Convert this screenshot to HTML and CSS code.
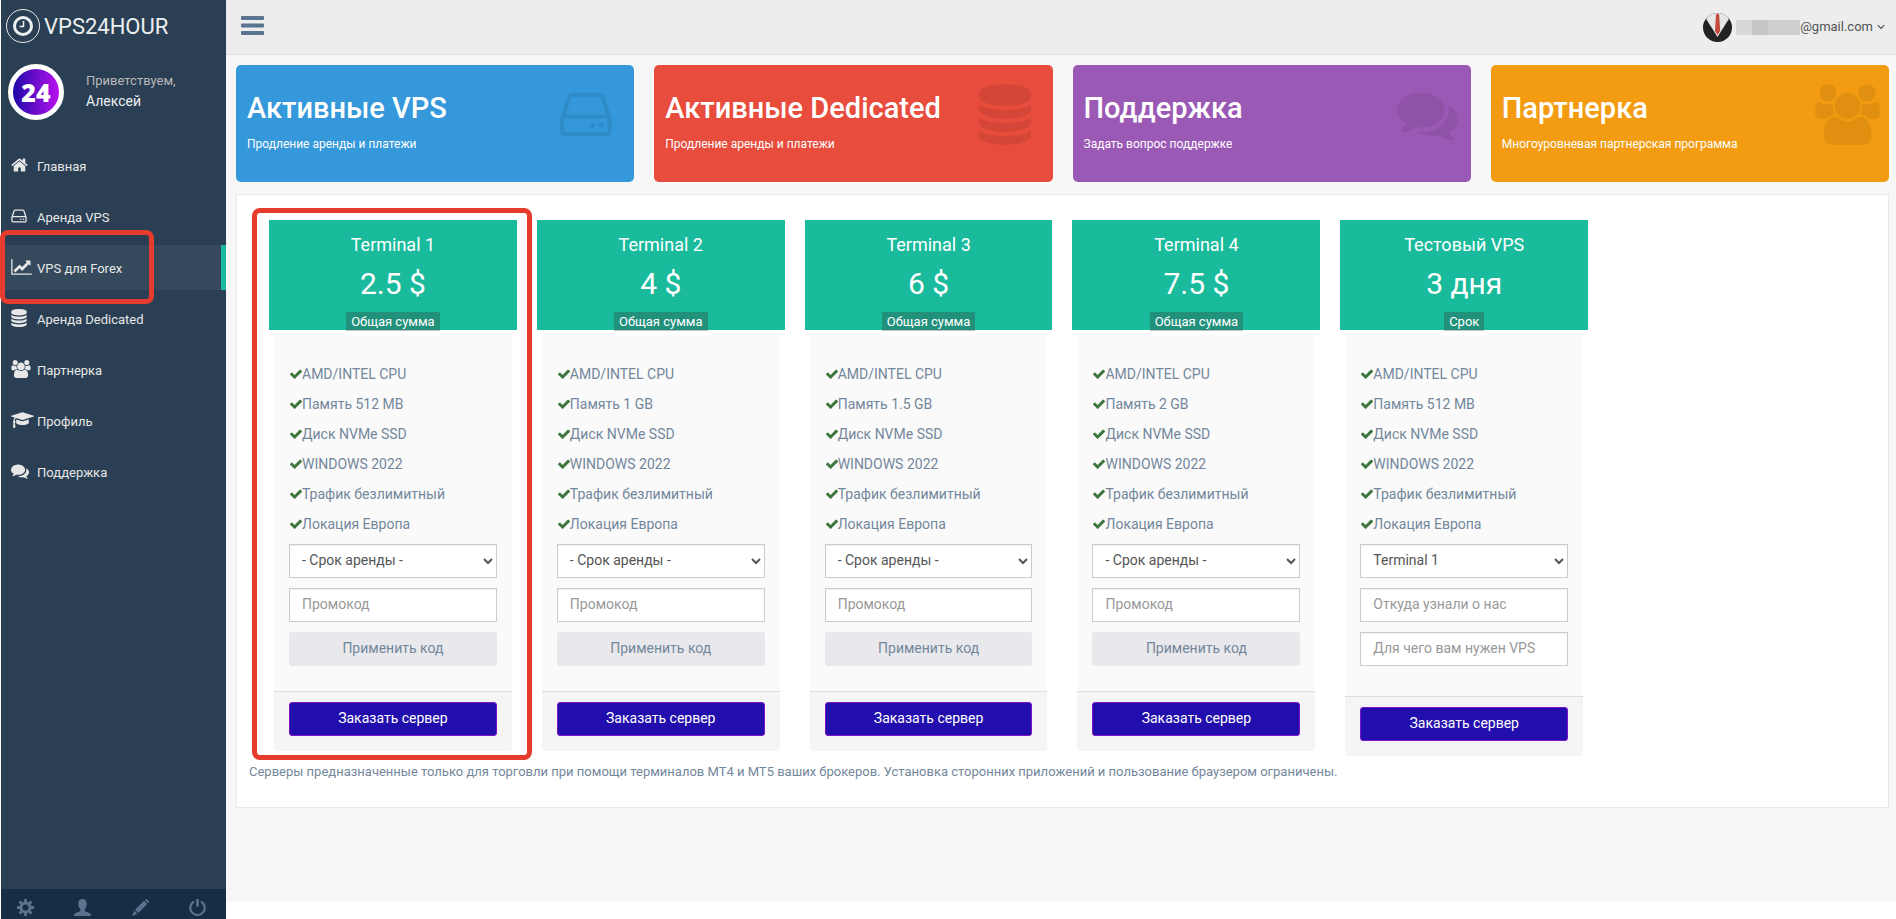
FILE: index.html
```html
<!DOCTYPE html>
<html lang="ru">
<head>
<meta charset="utf-8">
<title>VPS24HOUR</title>
<link rel="stylesheet" href="styles.css">
</head>
<body>
<svg class="sprite" aria-hidden="true">
  <symbol id="home" viewBox="64 0 1664 1792"><path d="M1472 992v480q0 26-19 45t-45 19h-384v-384h-256v384h-384q-26 0-45-19t-19-45v-480q0-1 .5-3t.5-3l575-474 575 474q1 2 1 6zm223-69l-62 74q-8 9-21 11h-3q-13 0-21-7l-692-577-692 577q-12 8-24 7-13-2-21-11l-62-74q-8-10-7-23.5t11-21.5l719-599q32-26 76-26t76 26l244 204v-195q0-14 9-23t23-9h192q14 0 23 9t9 23v408l219 182q10 8 11 21.5t-7 23.5z"/></symbol>
  <symbol id="hdd" viewBox="128 0 1536 1792"><path d="M1168 1216q0 33-23.500 56.500t-56.500 23.500-56.500-23.500-23.500-56.500 23.500-56.500 56.500-23.500 56.500 23.500 23.500 56.500zm256 0q0 33-23.500 56.500t-56.500 23.500-56.500-23.500-23.500-56.500 23.500-56.500 56.500-23.500 56.500 23.500 23.500 56.500zm112 160v-320q0-13-9.500-22.500t-22.500-9.500h-1216q-13 0-22.500 9.500t-9.500 22.500v320q0 13 9.500 22.500t22.500 9.500h1216q13 0 22.500-9.500t9.500-22.500zm-1230-480h1180l-157-482q-4-13-16-21.500t-26-8.500h-782q-14 0-26 8.500t-16 21.500zm1358 160v320q0 66-47 113t-113 47h-1216q-66 0-113-47t-47-113v-320q0-25 16-75l197-606q17-53 63-86t101-33h782q55 0 101 33t63 86l197 606q16 50 16 75z"/></symbol>
  <symbol id="chart" viewBox="0 0 2048 1792"><path d="M2048 1536v128h-2048v-1536h128v1408h1920zm-128-1248v435q0 21-19.500 29.500t-35.500-7.500l-121-121-633 633q-10 10-23 10t-23-10l-233-233-416 416-192-192 585-585q10-10 23-10t23 10l233 233 464-464-121-121q-16-16-7.500-35.500t29.500-19.500h435q14 0 23 9t9 23z"/></symbol>
  <symbol id="database" viewBox="128 0 1536 1792"><path d="M896 768q237 0 443-43t325-127v170q0 69-103 128t-280 93.500-385 34.500-385-34.500-280-93.500-103-128v-170q119 84 325 127t443 43zm0 768q237 0 443-43t325-127v170q0 69-103 128t-280 93.500-385 34.500-385-34.500-280-93.500-103-128v-170q119 84 325 127t443 43zm0-384q237 0 443-43t325-127v170q0 69-103 128t-280 93.500-385 34.500-385-34.500-280-93.500-103-128v-170q119 84 325 127t443 43zm0-1152q208 0 385 34.500t280 93.500 103 128v128q0 69-103 128t-280 93.500-385 34.500-385-34.500-280-93.500-103-128v-128q0-69 103-128t280-93.500 385-34.500z"/></symbol>
  <symbol id="users" viewBox="0 0 1920 1792"><path d="M593 896q-162 5-265 128h-134q-82 0-138-40.500t-56-118.500q0-353 124-353 6 0 43.500 21t97.500 42.500 119 21.500q67 0 133-23-5 37-5 66 0 139 81 256zm1071 637q0 120-73 189.500t-194 69.500h-874q-121 0-194-69.500t-73-189.500q0-53 3.500-103.500t14-109 26.500-108.500 43-97.500 62-81 85.500-53.500 111.500-20q10 0 43 21.500t73 48 107 48 135 21.500 135-21.500 107-48 73-48 43-21.500q61 0 111.500 20t85.500 53.500 62 81 43 97.500 26.500 108.500 14 109 3.500 103.500zm-1024-1277q0 106-75 181t-181 75-181-75-75-181 75-181 181-75 181 75 75 181zm704 384q0 159-112.500 271.500t-271.500 112.500-271.500-112.500-112.500-271.500 112.500-271.500 271.500-112.500 271.500 112.500 112.500 271.500zm576 225q0 78-56 118.500t-138 40.500h-134q-103-123-265-128 81-117 81-256 0-29-5-66 66 23 133 23 59 0 119-21.500t97.500-42.500 43.500-21q124 0 124 353zm-128-609q0 106-75 181t-181 75-181-75-75-181 75-181 181-75 181 75 75 181z"/></symbol>
  <symbol id="cap" viewBox="0 0 2304 1792"><path d="M1774 836l18 316q4 69-82 128t-235 93.500-323 34.500-323-34.500-235-93.500-82-128l18-316 574 181q22 7 48 7t48-7zm530-324q0 23-22 31l-1120 352q-4 1-10 1t-10-1l-652-206q-43 34-71 111.500t-34 178.500q63 36 63 109 0 69-58 107l58 433q2 14-8 25-9 11-24 11h-192q-15 0-24-11-10-11-8-25l58-433q-58-38-58-107 0-73 65-111 11-207 98-330l-333-104q-22-8-22-31t22-31l1120-352q4-1 10-1t10 1l1120 352q22 8 22 31z"/></symbol>
  <symbol id="comments" viewBox="0 0 1792 1792"><path d="M1408 768q0 139-94 257t-256.500 186.500-353.500 68.500q-86 0-176-16-124 88-278 128-36 9-86 16h-3q-11 0-20.500-8t-11.500-21q-1-3-1-6.500t.5-6.500 2-6l2.500-5 3.500-5.500 4-5 4.500-5 4-4.500q5-6 23-25t26-29.500 22.500-29 25-38.500 20.500-44q-124-72-195-177t-71-224q0-139 94-257t256.500-186.500 353.500-68.500 353.500 68.500 256.500 186.500 94 257zm384 256q0 120-71 224.500t-195 176.500q10 24 20.500 44t25 38.500 22.500 29 26 29.500 23 25q1 1 4 4.500t4.500 5 4 5 3.500 5.500l2.500 5 2 6 .5 6.500-1 6.500q-3 14-13 22t-22 7q-50-7-86-16-154-40-278-128-90 16-176 16-271 0-472-132 58 4 88 4 161 0 309-45t264-129q125-92 192-212t67-254q0-77-23-152 129 71 204 178t75 230z"/></symbol>
  <symbol id="check" viewBox="121 0 1550 1792"><path d="M1671 566q0 40-28 68l-724 724-136 136q-28 28-68 28t-68-28l-136-136-362-362q-28-28-28-68t28-68l136-136q28-28 68-28t68 28l294 295 656-657q28-28 68-28t68 28l136 136q28 28 28 68z"/></symbol>
</svg>

<div class="layout">
  <aside class="sidebar">
    <a class="brand" href="#">
      <span class="brand-mark"><svg width="22" height="22" viewBox="0 0 22 22" fill="none" stroke="currentColor"><circle cx="11" cy="11" r="8.500" stroke-width="3"/><path d="M11.500 6v5.500H7.500" stroke-width="1.500"/></svg></span>
      <span>VPS24HOUR</span>
    </a>
    <div class="profile">
      <span class="profile-pic">24</span>
      <div><span class="greet">Приветствуем,</span><span class="name">Алексей</span></div>
    </div>
    <nav class="menu">
      <a href="#"><svg class="w17"><use href="#home"/></svg>Главная</a>
      <a href="#"><svg class="w16"><use href="#hdd"/></svg>Аренда VPS</a>
      <a href="#" class="active"><svg class="w21"><use href="#chart"/></svg>VPS для Forex<span class="mark mark-menu"></span></a>
      <a href="#"><svg class="w16"><use href="#database"/></svg>Аренда Dedicated</a>
      <a href="#"><svg class="w20"><use href="#users"/></svg>Партнерка</a>
      <a href="#"><svg class="w23"><use href="#cap"/></svg>Профиль</a>
      <a href="#"><svg class="w18"><use href="#comments"/></svg>Поддержка</a>
    </nav>
    <div class="side-footer">
      <a href="#" aria-label="Настройки"><svg viewBox="0 0 17 17"><g fill="none" stroke="currentColor"><circle cx="8.500" cy="8.500" r="4.600" stroke-width="3"/><path d="M8.500 0v3M8.500 14v3M0 8.500h3M14 8.500h3M2.500 2.500l2.100 2.100M12.400 12.400l2.100 2.100M2.500 14.500l2.100-2.100M12.400 4.600l2.100-2.100" stroke-width="2.800"/></g></svg></a>
      <a href="#" aria-label="Профиль"><svg viewBox="0 0 17 17"><path fill="currentColor" d="M8.500 0C5.800 0 4.300 1.800 4.300 4.700c0 2.300.8 4.300 2 5.400v1.300c0 .6-.3.900-.8 1.100L1.700 14C.6 14.500 0 15.200 0 17h17c0-1.800-.6-2.500-1.700-3l-3.800-1.500c-.5-.2-.8-.5-.8-1.100v-1.300c1.200-1.100 2-3.100 2-5.400C12.700 1.800 11.200 0 8.500 0z"/></svg></a>
      <a href="#" aria-label="Редактировать"><svg viewBox="0 0 17 17"><path fill="currentColor" d="M12.900.9l.7-.6q.6-.6 1.200 0l2 2q.6.600 0 1.200l-.7.700zM12 1.800l3.300 3.300-9 9L3 10.800zM2.300 11.700l3.200 3.200L0 17z"/></svg></a>
      <a href="#" aria-label="Выход"><svg viewBox="0 0 17 17" fill="none" stroke="currentColor"><path d="M5 2.500a7.200 7.200 0 1 0 7 0" stroke-width="2.200"/><path d="M8.500 0v7.500" stroke-width="2.600"/></svg></a>
    </div>
  </aside>

  <main class="content">
    <header class="topbar">
      <button class="toggle" type="button" aria-label="Меню"><svg width="23" height="19" viewBox="0 0 23 19" fill="currentColor"><rect width="23" height="4" rx="1"/><rect y="7.500" width="23" height="4" rx="1"/><rect y="15" width="23" height="4" rx="1"/></svg></button>
      <a class="account" href="#">
        <svg width="29" height="29" viewBox="0 0 29 29"><clipPath id="round"><circle cx="14.500" cy="14.500" r="14.500"/></clipPath><g clip-path="url(#round)"><path fill="#222" d="M0 0h29v29H0z"/><path fill="#e6e6e6" d="M2 0h25l-1.500 6.500L14.500 24 3.500 6.500z"/><path fill="#c44a3c" d="M14.500 0l1.700 2 1 16-2.700 4-2.500-4 1-16z"/></g></svg>
        <span class="redacted"></span><span>@gmail.com</span>
        <svg class="caret" width="8" height="6" viewBox="0 0 8 6" fill="none" stroke="currentColor" stroke-width="1.200"><path d="M.8 1.200L4 4.400l3.200-3.200"/></svg>
      </a>
    </header>

    <div class="page">
      <section class="tiles">
        <a class="tile blue" href="#"><div><h3>Активные VPS</h3><p>Продление аренды и платежи</p></div><span class="tile-icon"><svg class="t52"><use href="#hdd"/></svg></span></a>
        <a class="tile red" href="#"><div><h3>Активные Dedicated</h3><p>Продление аренды и платежи</p></div><span class="tile-icon"><svg class="t52"><use href="#database"/></svg></span></a>
        <a class="tile purple" href="#"><div><h3>Поддержка</h3><p>Задать вопрос поддержке</p></div><span class="tile-icon"><svg class="t61"><use href="#comments"/></svg></span></a>
        <a class="tile orange" href="#"><div><h3>Партнерка</h3><p>Многоуровневая партнерская программа</p></div><span class="tile-icon"><svg class="t65"><use href="#users"/></svg></span></a>
      </section>

      <section class="panel">
        <div class="plans">
          <article class="plan">
            <header><h2>Terminal 1</h2><div class="price">2.5 $</div><span class="tag">Общая сумма</span></header>
            <form><div class="plan-body">
              <ul><li><svg><use href="#check"/></svg>AMD/INTEL CPU</li><li><svg><use href="#check"/></svg>Память 512 MB</li><li><svg><use href="#check"/></svg>Диск NVMe SSD</li><li><svg><use href="#check"/></svg>WINDOWS 2022</li><li><svg><use href="#check"/></svg>Трафик безлимитный</li><li><svg><use href="#check"/></svg>Локация Европа</li></ul>
              <select aria-label="Срок аренды"><option>- Срок аренды -</option></select>
              <input type="text" placeholder="Промокод" aria-label="Промокод">
              <button class="apply" type="button">Применить код</button>
            </div><div class="plan-foot"><button class="order" type="button">Заказать сервер</button></div></form>
            <span class="mark mark-plan"></span>
          </article>
          <article class="plan">
            <header><h2>Terminal 2</h2><div class="price">4 $</div><span class="tag">Общая сумма</span></header>
            <form><div class="plan-body">
              <ul><li><svg><use href="#check"/></svg>AMD/INTEL CPU</li><li><svg><use href="#check"/></svg>Память 1 GB</li><li><svg><use href="#check"/></svg>Диск NVMe SSD</li><li><svg><use href="#check"/></svg>WINDOWS 2022</li><li><svg><use href="#check"/></svg>Трафик безлимитный</li><li><svg><use href="#check"/></svg>Локация Европа</li></ul>
              <select aria-label="Срок аренды"><option>- Срок аренды -</option></select>
              <input type="text" placeholder="Промокод" aria-label="Промокод">
              <button class="apply" type="button">Применить код</button>
            </div><div class="plan-foot"><button class="order" type="button">Заказать сервер</button></div></form>
          </article>
          <article class="plan">
            <header><h2>Terminal 3</h2><div class="price">6 $</div><span class="tag">Общая сумма</span></header>
            <form><div class="plan-body">
              <ul><li><svg><use href="#check"/></svg>AMD/INTEL CPU</li><li><svg><use href="#check"/></svg>Память 1.5 GB</li><li><svg><use href="#check"/></svg>Диск NVMe SSD</li><li><svg><use href="#check"/></svg>WINDOWS 2022</li><li><svg><use href="#check"/></svg>Трафик безлимитный</li><li><svg><use href="#check"/></svg>Локация Европа</li></ul>
              <select aria-label="Срок аренды"><option>- Срок аренды -</option></select>
              <input type="text" placeholder="Промокод" aria-label="Промокод">
              <button class="apply" type="button">Применить код</button>
            </div><div class="plan-foot"><button class="order" type="button">Заказать сервер</button></div></form>
          </article>
          <article class="plan">
            <header><h2>Terminal 4</h2><div class="price">7.5 $</div><span class="tag">Общая сумма</span></header>
            <form><div class="plan-body">
              <ul><li><svg><use href="#check"/></svg>AMD/INTEL CPU</li><li><svg><use href="#check"/></svg>Память 2 GB</li><li><svg><use href="#check"/></svg>Диск NVMe SSD</li><li><svg><use href="#check"/></svg>WINDOWS 2022</li><li><svg><use href="#check"/></svg>Трафик безлимитный</li><li><svg><use href="#check"/></svg>Локация Европа</li></ul>
              <select aria-label="Срок аренды"><option>- Срок аренды -</option></select>
              <input type="text" placeholder="Промокод" aria-label="Промокод">
              <button class="apply" type="button">Применить код</button>
            </div><div class="plan-foot"><button class="order" type="button">Заказать сервер</button></div></form>
          </article>
          <article class="plan trial">
            <header><h2>Тестовый VPS</h2><div class="price">3 дня</div><span class="tag">Срок</span></header>
            <form><div class="plan-body">
              <ul><li><svg><use href="#check"/></svg>AMD/INTEL CPU</li><li><svg><use href="#check"/></svg>Память 512 MB</li><li><svg><use href="#check"/></svg>Диск NVMe SSD</li><li><svg><use href="#check"/></svg>WINDOWS 2022</li><li><svg><use href="#check"/></svg>Трафик безлимитный</li><li><svg><use href="#check"/></svg>Локация Европа</li></ul>
              <select aria-label="Тариф"><option>Terminal 1</option></select>
              <input type="text" placeholder="Откуда узнали о нас" aria-label="Откуда узнали о нас">
              <input type="text" placeholder="Для чего вам нужен VPS" aria-label="Для чего вам нужен VPS">
            </div><div class="plan-foot"><button class="order" type="button">Заказать сервер</button></div></form>
          </article>
        </div>
        <p class="note">Серверы предназначенные только для торговли при помощи терминалов МТ4 и МТ5 ваших брокеров. Установка сторонних приложений и пользование браузером ограничены.</p>
      </section>
    </div>
  </main>
</div>
</body>
</html>
```

FILE: styles.css
```css
* { box-sizing: border-box; }
body { margin: 0; background: #fff; color: #73879c; font: 13px/20px Roboto, "Open Sans", sans-serif; }
a { color: inherit; text-decoration: none; }
h2, h3, p, ul { margin: 0; padding: 0; }
svg { display: block; fill: currentColor; }
svg[fill="none"], svg g[fill="none"] { fill: none; }
.sprite { position: absolute; width: 0; height: 0; }

.layout { display: flex; min-height: 100vh; padding-left: 1px; }

/* Sidebar */
.sidebar { flex: 0 0 225px; display: flex; flex-direction: column; background: #2a3f54; color: #e7e7e7; }
.brand { display: flex; align-items: center; gap: 4px; height: 52px; padding-left: 5px; font-size: 22px; line-height: 24px; color: #ecf0f1; }
.brand > span:last-child { padding-top: 2px; }
.brand-mark { display: grid; place-items: center; width: 34px; height: 34px; border: 1px solid #eaeaea; border-radius: 50%; }
.profile { display: flex; align-items: center; gap: 22px; padding: 12px 0 0 7px; }
.profile > div { padding-bottom: 3px; }
.profile-pic { display: grid; place-items: center; width: 56px; height: 56px; border: 5px solid #fff; border-radius: 50%; background: linear-gradient(90deg, #1f08a8, #b912ee); color: #fff; font: 800 25px/24px "Open Sans", sans-serif; }
.greet, .name { display: block; line-height: 21px; }
.greet { color: #bab8b8; }
.name { font-size: 14px; color: #ecf0f1; }
.menu { display: flex; flex-direction: column; gap: 6px; margin-top: 23px; }
.menu a { position: relative; display: flex; align-items: center; height: 45px; padding: 2px 0 0 10px; }
.menu svg { height: 18px; margin-bottom: 4px; }
.menu .active { background: #35495d; border-right: 5px solid #1abb9c; }
.w16 { width: 16px; margin-right: 10px; }
.w17 { width: 17px; margin-right: 9px; }
.w18 { width: 18px; margin-right: 8px; }
.w20 { width: 20px; margin-right: 6px; }
.w21 { width: 21px; margin-right: 5px; }
.w23 { width: 23px; margin-right: 3px; }
.side-footer { display: flex; justify-content: space-between; margin-top: auto; padding: 10px 20px 3px 16px; background: #172d44; color: #5a738e; }
.side-footer svg { width: 17px; height: 17px; }

/* Highlight frames over the active item and the first plan */
.mark { position: absolute; border: 5px solid #e63b2e; border-radius: 8px; pointer-events: none; }
.mark-menu { left: -1px; top: -15px; width: 154px; height: 74px; }
.mark-plan { inset: -12px -15px -9px -17px; }

/* Content */
.content { flex: 1; min-width: 0; margin-bottom: 17px; background: #f7f7f7; }
.topbar { display: flex; align-items: center; justify-content: space-between; height: 55px; padding: 0 11px 12px 15px; background: #ededed; border-bottom: 1px solid #d9dee4; }
.toggle { padding: 8px 0 0; border: 0; background: none; color: #5a738e; }
.account { display: flex; align-items: center; padding-top: 12px; color: #515356; }
.redacted { width: 64px; height: 15px; margin-left: 4px; background: linear-gradient(90deg, #d8d8d8 16px, #c6c6c6 16px 32px, #cfcfcf 32px); }
.caret { margin-left: 4px; }
.page { padding: 10px 7px 20px 10px; }
.tiles { display: grid; grid-template-columns: repeat(4, 1fr); gap: 20px; }
.tile { display: flex; justify-content: space-between; height: 117px; border-radius: 5px; color: #fff; }
.tile div { padding: 23px 0 0 11px; white-space: nowrap; }
.tile h3 { font-size: 29px; line-height: 40px; font-weight: 500; }
.tile p { margin-top: 6px; font-size: 12px; line-height: 20px; }
.tile-icon { flex: 0 0 74px; padding-top: 19px; color: rgba(0, 0, 0, .08); }
.tile-icon svg { height: 61px; }
.t52 { width: 52px; }
.t61 { width: 61px; }
.t65 { width: 65px; }
.blue { background: #3498db; }
.red { background: #e74c3c; }
.purple { background: #9b59b6; }
.orange { background: #f39c12; }

.panel { margin-top: 12px; padding: 25px 0; background: #fff; border: 1px solid #e6e9ed; }
.plans { display: grid; grid-template-columns: repeat(6, 1fr); gap: 20px; align-items: start; padding: 0 32px; }
.plan { position: relative; font-size: 14px; }
.plan header { display: flex; flex-direction: column; align-items: center; padding-top: 12px; background: #1abb9c; color: #fff; }
.plan h2 { font-size: 18px; line-height: 26px; font-weight: 400; }
.price { margin: 4px 0 7px; font-size: 30px; line-height: 43px; }
.tag { margin-bottom: -1px; padding: 0 5px; background: rgba(51, 51, 51, .3); font-size: 13px; line-height: 19px; }
.plan form { margin: 5px 5px 0; }
.plan-body { display: flex; flex-direction: column; gap: 10px; padding: 29px 15px 25px; background: #fafafa; }
.trial .plan-body { padding-bottom: 30px; }
.plan ul { display: flex; flex-direction: column; gap: 10px; list-style: none; }
.plan li { display: flex; align-items: center; }
.plan li svg { width: 12px; height: 14px; margin-left: 1px; color: #3c763d; }
.plan select, .plan input, .plan button { width: 100%; height: 34px; font: inherit; }
.plan select, .plan input { padding: 5px 12px 7px; border: 1px solid #ccc; border-radius: 0; background-color: #fff; color: #555; box-shadow: inset 0 1px 1px rgba(0, 0, 0, .075); }
.plan select { padding-left: 8px; }
.plan input::placeholder { color: #999; }
.plan button { padding: 0 12px 2px; border-radius: 3px; }
.apply { border: 0; background: #e9e9ed; color: #73879c; }
.order { border: 1px solid #8212c8; background: #220eac; color: #fff; }
.plan-foot { padding: 10px 15px 15px; border-top: 1px solid #ddd; border-radius: 0 0 4px 4px; background: #f5f5f5; }
.note { padding: 6px 12px 0; }
```
